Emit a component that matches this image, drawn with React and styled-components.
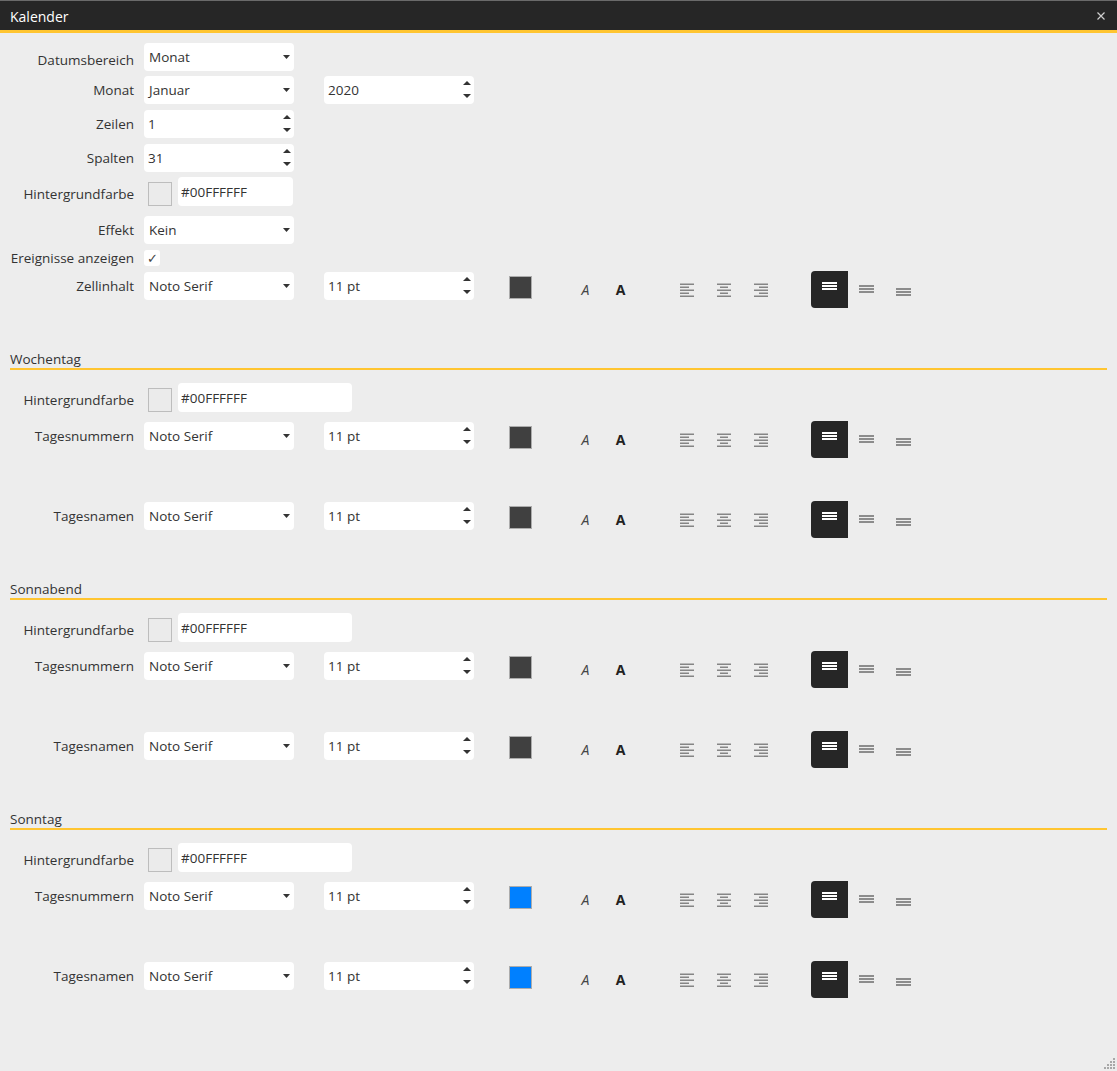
import React from 'react';
import styled, { createGlobalStyle } from 'styled-components';

const GlobalStyle = createGlobalStyle`
  body {
    margin: 0;
    background: #ededed;
    font-family: "Open Sans", "Noto Sans", sans-serif;
  }
`;

const Window = styled.div`
  position: relative;
  width: 1117px;
  height: 1071px;
  background: #ededed;
  overflow: hidden;
`;

const TitleBar = styled.div`
  box-sizing: border-box;
  height: 33px;
  border-top: 1px solid #6a6a6a;
  border-bottom: 3px solid #ffc531;
  background: #262626;
  display: flex;
  align-items: center;
  justify-content: space-between;
  padding: 1px 12px 0 10px;
`;

const Title = styled.div`
  color: #fff;
  font-size: 14px;
`;

const Content = styled.div`
  padding: 10px 10px 0;
`;

const Row = styled.div`
  display: flex;
  align-items: flex-start;
  height: ${p => p.$h || 28}px;
  margin-top: ${p => p.$mt || 0}px;
`;

const Label = styled.div`
  flex-shrink: 0;
  width: 124px;
  margin-right: 10px;
  padding-top: ${p => p.$pt || 0}px;
  display: flex;
  justify-content: flex-end;
  white-space: nowrap;
  font-size: 13.5px;
  line-height: ${p => p.$lh || 28}px;
  color: #333;
`;

const Field = styled.div`
  box-sizing: border-box;
  width: ${p => p.$w || 150}px;
  height: ${p => p.$h || 28}px;
  margin-left: ${p => p.$ml || 0}px;
  padding: 0 ${p => p.$pr || 4}px 0 ${p => p.$pl || 5}px;
  background: #fff;
  border-radius: 4px;
  display: flex;
  align-items: center;
  justify-content: space-between;
  font-size: 13.5px;
  color: #333;
`;

const Spinner = styled.div`
  box-sizing: border-box;
  height: 28px;
  padding: 5px 0 6px;
  display: flex;
  flex-direction: column;
  justify-content: space-between;
`;

const Swatch = styled.div`
  box-sizing: border-box;
  width: 24px;
  height: 24px;
  margin: 5px 0 0 4px;
  border: 1px solid #bdbdbd;
  background: #ebebeb;
`;

const Checkbox = styled.div`
  width: 16px;
  height: 16px;
  border-radius: 3px;
  background: #fff;
  display: flex;
  align-items: center;
  justify-content: center;
  font-size: 13px;
  color: #444;
`;

const Toolbar = styled.div`
  display: flex;
  align-items: center;
  height: 37px;
  margin-top: -1px;
`;

const ColorSwatch = styled.div`
  box-sizing: border-box;
  width: 23px;
  height: 23px;
  margin: 0 0 4px 35px;
  border: 1px solid #acacac;
  background: ${p => p.$color};
`;

const StyleCell = styled.div`
  width: 35px;
  margin-left: ${p => p.$ml || 0}px;
  text-align: center;
  font-size: 14px;
  font-style: ${p => (p.$italic ? 'italic' : 'normal')};
  font-weight: ${p => (p.$bold ? 700 : 400)};
  color: ${p => (p.$bold ? '#222' : '#444')};
`;

const AlignGroup = styled.div`
  display: flex;
  margin-left: 30px;
`;

const AlignCell = styled.div`
  width: 37px;
  height: 14px;
  display: flex;
  justify-content: center;
`;

const VAlignGroup = styled.div`
  display: flex;
  margin-left: 32px;
`;

const VAlignButton = styled.div`
  width: 37px;
  height: 37px;
  border-radius: 4px 0 0 4px;
  background: ${p => (p.$active ? '#262626' : 'transparent')};
`;

const SectionHeading = styled.div`
  margin-top: 50px;
  height: 18px;
  border-bottom: 2px solid #ffc531;
  font-size: 13.5px;
  line-height: 18px;
  color: #333;
`;

const Grip = styled.svg`
  position: absolute;
  right: 1px;
  bottom: 1px;
`;

const SelectArrow = () => (
  <svg width="7" height="4" viewBox="0 0 7 4">
    <polygon points="0,0 7,0 3.5,4" fill="#333" />
  </svg>
);

const SpinArrows = () => (
  <Spinner>
    <svg width="8" height="4" viewBox="0 0 8 4">
      <polygon points="0,4 8,4 4,0" fill="#333" />
    </svg>
    <svg width="8" height="4" viewBox="0 0 8 4">
      <polygon points="0,0 8,0 4,4" fill="#333" />
    </svg>
  </Spinner>
);

const SelectField = ({ value, ml }) => (
  <Field $ml={ml}>
    <span>{value}</span>
    <SelectArrow />
  </Field>
);

const SpinField = ({ value, ml }) => (
  <Field $ml={ml} $pl={4} $pr={3}>
    <span>{value}</span>
    <SpinArrows />
  </Field>
);

const AlignIcon = ({ kind }) => {
  const shortX = kind === 'left' ? 0 : kind === 'center' ? 3 : 5;
  const shortW = kind === 'center' ? 8 : 9;
  return (
    <svg width="14" height="14" viewBox="0 0 14 14">
      {[0.5, 3.5, 6.5, 9.5, 12.5].map((y, i) => (
        <rect key={y} x={i % 2 ? shortX : 0} y={y} width={i % 2 ? shortW : 14} height="1.5" fill="#858585" />
      ))}
    </svg>
  );
};

const VAlignIcon = ({ top, active }) => (
  <svg width="37" height="37" viewBox="0 0 37 37">
    {[0, 3, 6].map(d => (
      <rect key={d} x="11" y={top + d} width="15" height="2" fill={active ? '#fff' : '#8c8c8c'} />
    ))}
  </svg>
);

function FontRow({ label, color, mt }) {
  return (
    <Row $mt={mt}>
      <Label>{label}</Label>
      <SelectField value="Noto Serif" />
      <SpinField value="11 pt" ml={30} />
      <Toolbar>
        <ColorSwatch $color={color} />
        <StyleCell $italic $ml={36}>A</StyleCell>
        <StyleCell $bold>A</StyleCell>
        <AlignGroup>
          <AlignCell><AlignIcon kind="left" /></AlignCell>
          <AlignCell><AlignIcon kind="center" /></AlignCell>
          <AlignCell><AlignIcon kind="right" /></AlignCell>
        </AlignGroup>
        <VAlignGroup>
          <VAlignButton $active><VAlignIcon top={11} active /></VAlignButton>
          <VAlignButton><VAlignIcon top={14} /></VAlignButton>
          <VAlignButton><VAlignIcon top={17} /></VAlignButton>
        </VAlignGroup>
      </Toolbar>
    </Row>
  );
}

function ColorRow({ mt, wide }) {
  return (
    <Row $h={29} $mt={mt}>
      <Label $pt={3}>Hintergrundfarbe</Label>
      <Swatch />
      <Field $w={wide ? 174 : 115} $h={29} $ml={6} $pl={3}>
        <span>#00FFFFFF</span>
      </Field>
    </Row>
  );
}

const sections = [
  { title: 'Wochentag', color: '#404040' },
  { title: 'Sonnabend', color: '#404040' },
  { title: 'Sonntag', color: '#0080ff' },
];

function App() {
  return (
    <Window>
      <GlobalStyle />
      <TitleBar>
        <Title>Kalender</Title>
        <svg width="8" height="8" viewBox="0 0 8 8">
          <path d="M0.5 0.5 L7.5 7.5 M7.5 0.5 L0.5 7.5" stroke="#cfcfcf" strokeWidth="1.2" />
        </svg>
      </TitleBar>
      <Content>
        <Row>
          <Label $pt={3}>Datumsbereich</Label>
          <SelectField value="Monat" />
        </Row>
        <Row $mt={5}>
          <Label>Monat</Label>
          <SelectField value="Januar" />
          <SpinField value="2020" ml={30} />
        </Row>
        <Row $mt={6}>
          <Label>Zeilen</Label>
          <SpinField value="1" />
        </Row>
        <Row $mt={6}>
          <Label>Spalten</Label>
          <SpinField value="31" />
        </Row>
        <ColorRow mt={5} />
        <Row $mt={10}>
          <Label>Effekt</Label>
          <SelectField value="Kein" />
        </Row>
        <Row $h={16} $mt={6}>
          <Label $lh={16}>Ereignisse anzeigen</Label>
          <Checkbox>✓</Checkbox>
        </Row>
        <FontRow label="Zellinhalt" color="#404040" mt={6} />

        {sections.map(s => (
          <React.Fragment key={s.title}>
            <SectionHeading>{s.title}</SectionHeading>
            <ColorRow mt={13} wide />
            <FontRow label="Tagesnummern" color={s.color} mt={10} />
            <FontRow label="Tagesnamen" color={s.color} mt={52} />
          </React.Fragment>
        ))}
      </Content>
      <Grip width="12" height="12" viewBox="0 0 12 12">
        {[[9, 0], [6, 3], [9, 3], [3, 6], [6, 6], [9, 6], [0, 9], [3, 9], [6, 9], [9, 9]].map(([x, y]) => (
          <rect key={`${x}-${y}`} x={x} y={y} width="2" height="2" fill="#a8a8a8" />
        ))}
      </Grip>
    </Window>
  );
}

export default App;
